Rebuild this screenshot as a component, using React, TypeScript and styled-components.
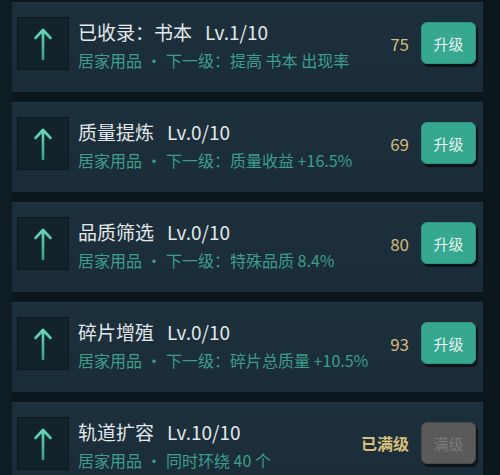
import styled, { createGlobalStyle } from "styled-components";

const GlobalStyle = createGlobalStyle`
  html, body {
    margin: 0;
    padding: 0;
    background: #0b171d;
    font-family: "Noto Sans CJK SC", "Noto Sans", sans-serif;
  }
`;

type Upgrade = {
  name: string;
  level: string;
  detail: string;
  cost?: number;
  maxed?: boolean;
};

const upgrades: Upgrade[] = [
  { name: "已收录：书本", level: "Lv.1/10", detail: "下一级：提高 书本 出现率", cost: 75 },
  { name: "质量提炼", level: "Lv.0/10", detail: "下一级：质量收益 +16.5%", cost: 69 },
  { name: "品质筛选", level: "Lv.0/10", detail: "下一级：特殊品质 8.4%", cost: 80 },
  { name: "碎片增殖", level: "Lv.0/10", detail: "下一级：碎片总质量 +10.5%", cost: 93 },
  { name: "轨道扩容", level: "Lv.10/10", detail: "同时环绕 40 个", maxed: true },
];

function ArrowIcon() {
  return (
    <svg width="20" height="34" viewBox="0 0 20 34" fill="none">
      <defs>
        <linearGradient id="arrowGrad" x1="0" y1="0" x2="0" y2="1">
          <stop offset="0" stopColor="#6ad8b8" />
          <stop offset="1" stopColor="#3c9f88" />
        </linearGradient>
      </defs>
      <path
        d="M10 32 V3 M2.5 11 L10 3 L17.5 11"
        stroke="url(#arrowGrad)"
        strokeWidth="2.6"
        strokeLinecap="round"
        strokeLinejoin="round"
      />
    </svg>
  );
}

export default function App() {
  return (
    <Page>
      <GlobalStyle />
      <List>
        {upgrades.map((u) => (
          <Card key={u.name}>
            <IconBox>
              <ArrowIcon />
            </IconBox>
            <Info>
              <Title>
                {u.name}
                <Level>{u.level}</Level>
              </Title>
              <Sub>
                居家用品<Dot>·</Dot>
                {u.detail}
              </Sub>
            </Info>
            <Action>
              <Cost $maxed={u.maxed}>{u.maxed ? "已满级" : u.cost}</Cost>
              <UpgradeButton $disabled={u.maxed}>
                {u.maxed ? "满级" : "升级"}
              </UpgradeButton>
            </Action>
          </Card>
        ))}
      </List>
    </Page>
  );
}

const Page = styled.div`
  width: 500px;
  height: 475px;
  overflow: hidden;
  background: linear-gradient(90deg, #0e1c23 0, #0e1c23 12px, #0b171d 12px);
`;

const List = styled.div`
  display: flex;
  flex-direction: column;
  gap: 10px;
  padding: 2px 17px 0 12px;
`;

const Card = styled.div`
  height: 90px;
  flex-shrink: 0;
  box-sizing: border-box;
  display: flex;
  align-items: flex-start;
  padding: 15px 7px 0 5px;
  background: linear-gradient(180deg, #1c303c 0%, #1a2c37 100%);
  box-shadow: inset 0 1px 0 rgba(120, 160, 170, 0.08);
`;

const IconBox = styled.div`
  width: 52px;
  height: 53px;
  box-sizing: border-box;
  display: flex;
  align-items: center;
  justify-content: center;
  background: #13232b;
  border: 1px solid #0d191f;
  flex-shrink: 0;
`;

const Info = styled.div`
  flex: 1;
  margin-left: 9px;
  padding-top: 3px;
  display: flex;
  flex-direction: column;
  gap: 5px;
  min-width: 0;
`;

const Title = styled.div`
  font-size: 19px;
  line-height: 24px;
  color: #e4e8ea;
  white-space: nowrap;
`;

const Level = styled.span`
  margin-left: 13px;
`;

const Sub = styled.div`
  font-size: 16px;
  line-height: 22px;
  color: #3e9e8c;
  white-space: nowrap;
`;

const Dot = styled.span`
  margin: 0 4px;
`;

const Action = styled.div`
  display: flex;
  align-items: center;
  gap: 12px;
  margin-top: 5px;
`;

const Cost = styled.span<{ $maxed?: boolean }>`
  font-size: ${(p) => (p.$maxed ? "16px" : "17px")};
  font-weight: ${(p) => (p.$maxed ? 700 : 400)};
  color: ${(p) => (p.$maxed ? "#d9c07c" : "#d6b97c")};
`;

const UpgradeButton = styled.div<{ $disabled?: boolean }>`
  width: 55px;
  height: 42px;
  box-sizing: border-box;
  display: flex;
  align-items: center;
  justify-content: center;
  border-radius: 6px;
  font-size: 15px;
  color: ${(p) => (p.$disabled ? "#7a7a7a" : "#e8f5f0")};
  background: ${(p) => (p.$disabled ? "#5a5a5a" : "#36a88f")};
  border: 1px solid ${(p) => (p.$disabled ? "#4a4a4a" : "#2e957e")};
  box-shadow: 2px 3px 0 #0b151a;
`;
